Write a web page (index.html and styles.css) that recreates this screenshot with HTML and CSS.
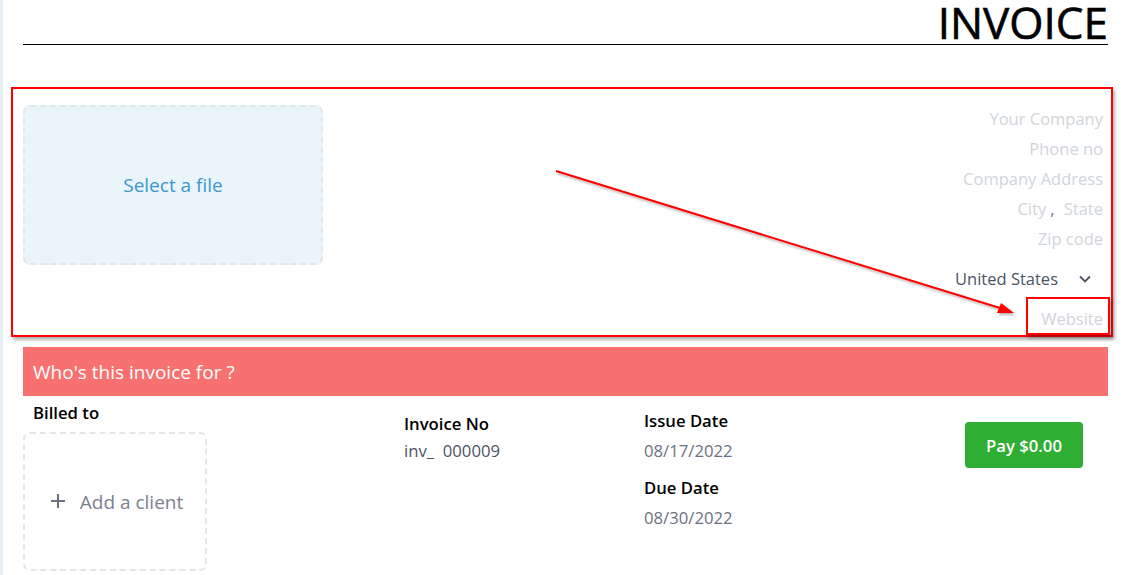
FILE: index.html
```html
<!DOCTYPE html>
<html lang="en">
<head>
<meta charset="utf-8">
<title>Invoice</title>
<link rel="stylesheet" href="styles.css">
</head>
<body>
<div class="edge"></div>
<main class="page">
  <header class="title-bar">
    <h1 class="title">INVOICE</h1>
  </header>

  <section class="company">
    <div class="logo-drop">Select a file</div>
    <div class="company-fields">
      <div class="field">Your Company</div>
      <div class="field">Phone no</div>
      <div class="field">Company Address</div>
      <div class="field">City<span class="comma">,</span> State</div>
      <div class="field">Zip code</div>
      <div class="country">
        <span>United States</span>
        <svg class="chev" width="14" height="10" viewBox="0 0 14 10"><path d="M2 2.5 L7 7.5 L12 2.5" fill="none" stroke="#4b5563" stroke-width="1.8"/></svg>
      </div>
      <div class="field website">Website</div>
    </div>
  </section>

  <div class="banner">Who's this invoice for ?</div>

  <section class="billing">
    <div class="billed">
      <div class="label billed-label">Billed to</div>
      <div class="client-drop">
        <svg class="plus" width="16" height="16" viewBox="0 0 16 16"><path d="M8 1 V15 M1 8 H15" fill="none" stroke="#6b7280" stroke-width="2"/></svg>
        <span>Add a client</span>
      </div>
    </div>
    <div class="inv-col">
      <div class="label">Invoice No</div>
      <div class="value dark inv-value">inv_&nbsp; 000009</div>
    </div>
    <div class="dates-col">
      <div class="label">Issue Date</div>
      <div class="value">08/17/2022</div>
      <div class="label due">Due Date</div>
      <div class="value">08/30/2022</div>
    </div>
    <div class="pay-col">
      <button class="pay">Pay $0.00</button>
    </div>
  </section>
</main>

<div class="annot-box big"></div>
<div class="annot-box small"></div>
<svg class="annot-arrow" width="1128" height="575" viewBox="0 0 1128 575">
  <defs>
    <filter id="sh" x="-10%" y="-10%" width="120%" height="120%">
      <feDropShadow dx="1.5" dy="2" stdDeviation="1" flood-color="#000" flood-opacity="0.3"/>
    </filter>
  </defs>
  <g filter="url(#sh)">
    <line x1="556" y1="171" x2="1000" y2="308" stroke="#ff0000" stroke-width="2"/>
    <polygon points="1014,313 997,313 1001,303" fill="#ff0000"/>
  </g>
</svg>
</body>
</html>
```
FILE: styles.css
```css
html, body {
  margin: 0;
  padding: 0;
  background: #ffffff;
  font-family: "Open Sans", "Noto Sans", sans-serif;
  color: #111;
}
.edge {
  position: fixed;
  left: 0;
  top: 0;
  bottom: 0;
  width: 3px;
  background: #e6edf2;
}
.page {
  padding: 0 20px 0 23px;
}
.title-bar {
  border-bottom: 1px solid #000;
  height: 44px;
  box-sizing: border-box;
  padding-top: 5px;
  display: flex;
  justify-content: flex-end;
  align-items: flex-start;
  height: 45px;
}
.title {
  margin: 0;
  font-size: 44px;
  font-weight: 400;
  -webkit-text-stroke: 0.6px #000;
  line-height: 34px;
  height: 34px;
  color: #000;
}
.company {
  margin-top: 60px;
  display: flex;
  justify-content: space-between;
  align-items: flex-start;
}
.logo-drop {
  width: 296px;
  height: 156px;
  background: #eaf5fb;
  border: 2px dashed #e3e6ea;
  border-radius: 7px;
  display: flex;
  align-items: center;
  justify-content: center;
  color: #3b97cd;
  font-size: 19px;
}
.company-fields {
  display: flex;
  flex-direction: column;
  align-items: flex-end;
  padding-right: 5px;
  margin-top: -1px;
}
.field {
  height: 30px;
  line-height: 30px;
  font-size: 16.5px;
  color: #d0d5db;
}
.comma {
  color: #6b7280;
  margin: 0 5px 0 4px;
}
.country {
  margin-top: 10px;
  height: 30px;
  line-height: 30px;
  font-size: 16.5px;
  color: #4b5563;
  display: flex;
  align-items: center;
  gap: 20px;
  padding-right: 11px;
}
.chev {
  display: block;
}
.website {
  margin-top: 10px;
}
.banner {
  margin-top: 13px;
  height: 49px;
  background: #f87171;
  color: #fff;
  font-size: 19px;
  line-height: 50px;
  padding-left: 10px;
}
.billing {
  display: flex;
  align-items: flex-start;
}
.billed {
  width: 381px;
}
.label {
  font-size: 16.7px;
  font-weight: 600;
  color: #000;
  line-height: 24px;
}
.billed-label {
  padding-left: 10px;
  margin-top: 5px;
}
.client-drop {
  margin-top: 7px;
  width: 180px;
  height: 135px;
  border: 2px dashed #e3e6ea;
  border-radius: 7px;
  display: flex;
  align-items: center;
  justify-content: center;
  gap: 14px;
  color: #7b818e;
  font-size: 19px;
}
.plus {
  display: block;
  margin-top: -2px;
  margin-left: 3px;
}
.inv-col {
  width: 240px;
  margin-top: 16px;
}
.value {
  font-size: 16.7px;
  color: #6b7280;
  line-height: 24px;
  margin-top: 6px;
}
.inv-value {
  margin-top: 3px;
}
.value.dark {
  color: #4b5563;
}
.dates-col {
  margin-top: 13px;
  flex: 1;
}
.due {
  margin-top: 13px;
}
.pay-col {
  margin-top: 26px;
  margin-right: 25px;
}
.pay {
  width: 118px;
  height: 46px;
  border: none;
  border-radius: 4px;
  background: #2eae33;
  color: #fff;
  font-family: "Open Sans", "Noto Sans", sans-serif;
  font-size: 16.7px;
  font-weight: 600;
  cursor: pointer;
}
.annot-box {
  position: absolute;
  border: 2px solid #ff0000;
  box-shadow: 2px 3px 3px rgba(0,0,0,0.3);
  pointer-events: none;
}
.annot-box.big {
  left: 11px;
  top: 87px;
  width: 1098px;
  height: 246px;
}
.annot-box.small {
  left: 1026px;
  top: 297px;
  width: 80px;
  height: 34px;
}
.annot-arrow {
  position: absolute;
  left: 0;
  top: 0;
  pointer-events: none;
}
```
